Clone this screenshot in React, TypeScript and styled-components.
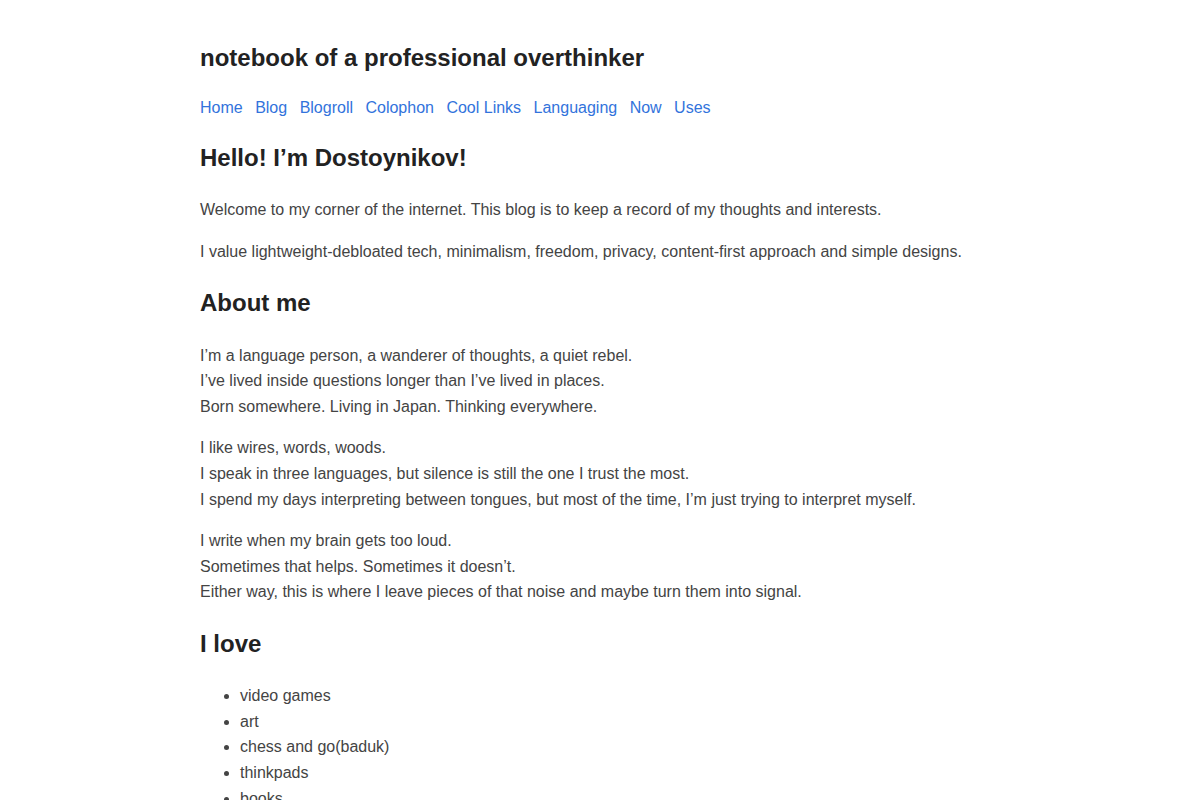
import React from "react";
import styled, { createGlobalStyle } from "styled-components";

const GlobalStyle = createGlobalStyle`
    html {
        background: #ffffff;
    }
    body {
        margin: 0;
        font-family: "Liberation Sans", Arial, Helvetica, sans-serif;
        font-size: 16px;
        line-height: 1.6;
        color: #444444;
        background: #ffffff;
    }
`;

const Page = styled.div`
    max-width: 800px;
    margin: 0 auto;
    padding: 23px 0 20px;
`;

const Header = styled.header``;

const SiteTitle = styled.h1`
    font-size: 24px;
    font-weight: bold;
    color: #222222;
    margin: 16px 0;
`;

const Nav = styled.nav`
    margin: 18px 0 -2px;
`;

const NavLink = styled.a`
    color: #3273dc;
    text-decoration: none;
    margin-right: 8px;
`;

const Heading = styled.h2`
    font-size: 24px;
    font-weight: bold;
    color: #222222;
    margin: 0.83em 0;
`;

const Para = styled.p`
    margin: 16px 0;
`;

const List = styled.ul`
    margin: 16px 0;
    padding-left: 40px;
`;

const links = ["Home", "Blog", "Blogroll", "Colophon", "Cool Links", "Languaging", "Now", "Uses"];

const loves = ["video games", "art", "chess and go(baduk)", "thinkpads", "books"];

const Lines: React.FC<{ lines: string[] }> = ({ lines }) => (
    <Para>
        {lines.map((line, i) => (
            <React.Fragment key={i}>
                {line}
                {i < lines.length - 1 ? <br /> : null}
            </React.Fragment>
        ))}
    </Para>
);

const App: React.FC = () => {
    return (
        <>
            <GlobalStyle />
            <Page>
                <Header>
                    <SiteTitle>notebook of a professional overthinker</SiteTitle>
                    <Nav>
                        {links.map((l) => (
                            <React.Fragment key={l}>
                                <NavLink href="#">{l}</NavLink>{" "}
                            </React.Fragment>
                        ))}
                    </Nav>
                </Header>
                <main>
                    <Heading>Hello! I’m Dostoynikov!</Heading>
                    <Para>Welcome to my corner of the internet. This blog is to keep a record of my thoughts and interests.</Para>
                    <Para>I value lightweight-debloated tech, minimalism, freedom, privacy, content-first approach and simple designs.</Para>
                    <Heading>About me</Heading>
                    <Lines
                        lines={[
                            "I’m a language person, a wanderer of thoughts, a quiet rebel.",
                            "I’ve lived inside questions longer than I’ve lived in places.",
                            "Born somewhere. Living in Japan. Thinking everywhere.",
                        ]}
                    />
                    <Lines
                        lines={[
                            "I like wires, words, woods.",
                            "I speak in three languages, but silence is still the one I trust the most.",
                            "I spend my days interpreting between tongues, but most of the time, I’m just trying to interpret myself.",
                        ]}
                    />
                    <Lines
                        lines={[
                            "I write when my brain gets too loud.",
                            "Sometimes that helps. Sometimes it doesn’t.",
                            "Either way, this is where I leave pieces of that noise and maybe turn them into signal.",
                        ]}
                    />
                    <Heading>I love</Heading>
                    <List>
                        {loves.map((item) => (
                            <li key={item}>{item}</li>
                        ))}
                    </List>
                </main>
            </Page>
        </>
    );
};

export default App;
